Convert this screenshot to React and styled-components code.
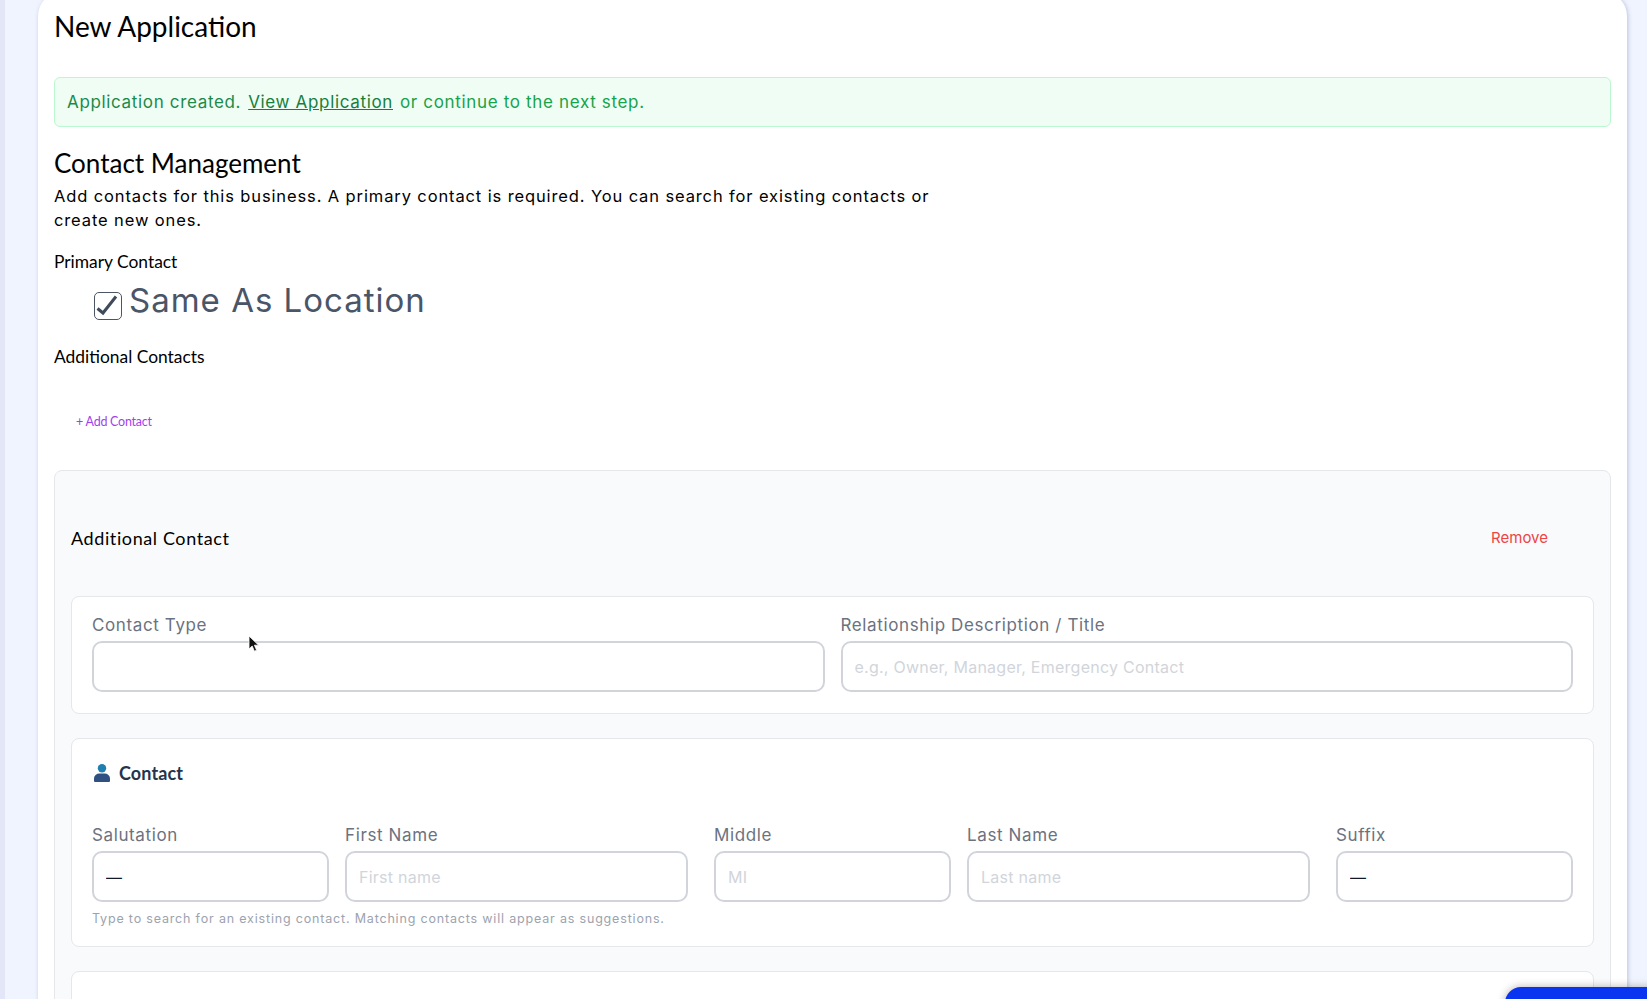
import styled, { createGlobalStyle } from "styled-components";

const GlobalStyle = createGlobalStyle`
  html, body {
    margin: 0;
    height: 100%;
    overflow: hidden;
    background: #f0f4ff;
  }
  body {
    font-family: "Inter", "Liberation Sans", sans-serif;
  }
`;

const headingFont = `"Lato", "Liberation Sans", sans-serif`;

const Page = styled.div`
  display: flex;
  height: 999px;
  overflow: hidden;
  background: #f0f4ff;
`;

const SideStrip = styled.div`
  width: 5px;
  flex-shrink: 0;
  background: #e2e6f6;
`;

const Main = styled.main`
  flex: 1;
  min-width: 0;
  padding: 0 20px 0 33px;
`;

const Card = styled.section`
  box-sizing: border-box;
  margin-top: -8px;
  min-height: 1100px;
  padding: 8px 16px 0;
  background: #fff;
  border-radius: 24px;
  box-shadow: 1px 1px 4px rgba(90, 100, 150, 0.35);
`;

const PageTitle = styled.h1`
  margin: 0;
  height: 77px;
  font-family: ${headingFont};
  font-size: 28px;
  line-height: 52px;
  font-weight: 400;
  color: #000;
`;

const Alert = styled.div`
  box-sizing: border-box;
  height: 50px;
  padding: 0 12px;
  display: flex;
  align-items: center;
  gap: 7px;
  background: #f0fdf4;
  border: 1px solid #bbf7d0;
  border-radius: 6px;
  font-size: 17px;
  letter-spacing: 0.66px;
  color: #16a34a;
`;

const AlertLead = styled.span`
  color: #1a8a4a;
`;

const AlertLink = styled.a`
  color: #15803d;
  text-decoration: underline;
`;

const SectionTitle = styled.h2`
  margin: 20px 0 0;
  font-family: ${headingFont};
  font-size: 26px;
  line-height: 32px;
  font-weight: 400;
  color: #000;
`;

const Intro = styled.p`
  margin: 5px 0 0;
  max-width: 880px;
  font-size: 16.5px;
  line-height: 24px;
  letter-spacing: 0.88px;
  color: #000;
`;

const SubHeading = styled.h3`
  margin: ${(props) => props.$top}px 0 0;
  font-family: ${headingFont};
  font-size: 17.4px;
  line-height: 24px;
  font-weight: 400;
  color: #000;
`;

const CheckRow = styled.label`
  display: flex;
  align-items: center;
  gap: 7px;
  margin: 6px 0 0 40px;
  height: 48px;
`;

const CheckBox = styled.span`
  box-sizing: border-box;
  width: 28px;
  height: 28px;
  margin-top: 3px;
  border: 1px solid #4b5563;
  border-radius: 5px;
  display: flex;
`;

const CheckText = styled.span`
  margin-bottom: 8px;
  font-size: 33px;
  letter-spacing: 1px;
  color: #4a5568;
`;

const AddButton = styled.button`
  display: block;
  margin: 43px 0 0 22px;
  padding: 0;
  border: 0;
  background: none;
  font-family: ${headingFont};
  font-size: 12.5px;
  line-height: 20px;
  letter-spacing: -0.24px;
  color: #a13ff0;
`;

const Panel = styled.div`
  box-sizing: border-box;
  margin-top: 38px;
  padding: 0 16px;
  background: #f9fafb;
  border: 1px solid #e5e7eb;
  border-radius: 8px;
  height: 600px;
`;

const PanelHeader = styled.div`
  display: flex;
  justify-content: space-between;
  align-items: center;
  height: 125px;
  padding: 8px 46px 0 0;
  box-sizing: border-box;
`;

const PanelTitle = styled.h4`
  margin: 0;
  font-family: ${headingFont};
  font-size: 18px;
  font-weight: 400;
  letter-spacing: 0.6px;
  color: #000;
`;

const RemoveButton = styled.button`
  padding: 0;
  border: 0;
  background: none;
  font-family: inherit;
  font-size: 15px;
  color: #ef4444;
`;

const SubCard = styled.div`
  box-sizing: border-box;
  margin-bottom: 24px;
  padding: ${(props) => props.$pad || "17px 20px 20px"};
  height: ${(props) => props.$height}px;
  background: #fff;
  border: 1px solid #e5e7eb;
  border-radius: 8px;
`;

const TwoColumns = styled.div`
  display: grid;
  grid-template-columns: 1fr 1fr;
  gap: 16px;
`;

const NameRow = styled.div`
  display: grid;
  grid-template-columns: 596fr 596fr 237fr;
  gap: 26px;
`;

const NamePair = styled.div`
  display: grid;
  grid-template-columns: 237fr 343fr;
  gap: 16px;
`;

const Field = styled.div`
  display: flex;
  flex-direction: column;
  min-width: 0;
`;

const FieldLabel = styled.label`
  font-size: 17px;
  line-height: 22px;
  letter-spacing: 0.62px;
  color: #6b7280;
  margin-bottom: 5px;
`;

const TextInput = styled.input`
  box-sizing: border-box;
  width: 100%;
  height: 51px;
  padding: 0 12px;
  border: 2px solid #d1d5db;
  border-radius: 10px;
  background: #fff;
  font-family: inherit;
  font-size: 16px;
  letter-spacing: 0.25px;
  color: #111827;
  &::placeholder {
    color: #d1d5db;
    opacity: 1;
  }
`;

const GroupHeading = styled.div`
  display: flex;
  align-items: center;
  gap: 9px;
  height: 68px;
  margin: 0 0 17px 2px;
  font-family: ${headingFont};
  font-size: 18px;
  font-weight: 700;
  letter-spacing: 0.1px;
  color: #24344d;
`;

const Hint = styled.div`
  margin-top: 8px;
  font-size: 12.5px;
  line-height: 18px;
  letter-spacing: 0.82px;
  color: #9ca3af;
`;

const CursorMark = styled.svg`
  position: absolute;
  left: 248px;
  top: 635px;
`;

const HelpTab = styled.div`
  position: fixed;
  right: -60px;
  bottom: -40px;
  width: 202px;
  height: 52px;
  background: #0a35f0;
  border-radius: 16px;
  box-shadow: 0 0 8px rgba(0, 0, 0, 0.3);
`;

const PersonIcon = () => (
  <svg width="16" height="18" viewBox="0 0 16 18">
    <circle cx="8" cy="4.3" r="4.2" fill="#1f7fb0" />
    <path
      d="M0 14.5a5.5 5 0 0 1 5.5-5h5a5.5 5 0 0 1 5.5 5V17a1 1 0 0 1-1 1H1a1 1 0 0 1-1-1z"
      fill="#2f5080"
    />
  </svg>
);

const CheckMark = () => (
  <svg width="26" height="26" viewBox="0 0 26 26">
    <path
      d="M2.5 15.5l5.5 4.5L21 3.5"
      fill="none"
      stroke="#3f4b5b"
      strokeWidth="3"
    />
  </svg>
);

const TextField = ({ label, placeholder, value }) => (
  <Field>
    <FieldLabel>{label}</FieldLabel>
    <TextInput placeholder={placeholder} defaultValue={value} />
  </Field>
);

export default function App() {
  return (
    <Page>
      <GlobalStyle />
      <SideStrip />
      <Main>
        <Card>
          <PageTitle>New Application</PageTitle>
          <Alert>
            <AlertLead>Application created.</AlertLead>
            <AlertLink href="#">View Application</AlertLink> or continue to the next step.
          </Alert>
          <SectionTitle>Contact Management</SectionTitle>
          <Intro>
            Add contacts for this business. A primary contact is required. You can search
            for existing contacts or create new ones.
          </Intro>
          <SubHeading $top={18}>Primary Contact</SubHeading>
          <CheckRow>
            <CheckBox>
              <CheckMark />
            </CheckBox>
            <CheckText>Same As Location</CheckText>
          </CheckRow>
          <SubHeading $top={17}>Additional Contacts</SubHeading>
          <AddButton>+ Add Contact</AddButton>
          <Panel>
            <PanelHeader>
              <PanelTitle>Additional Contact</PanelTitle>
              <RemoveButton>Remove</RemoveButton>
            </PanelHeader>
            <SubCard $height={118}>
              <TwoColumns>
                <TextField label="Contact Type" />
                <TextField
                  label="Relationship Description / Title"
                  placeholder="e.g., Owner, Manager, Emergency Contact"
                />
              </TwoColumns>
            </SubCard>
            <SubCard $height={209} $pad="0 20px">
              <GroupHeading>
                <PersonIcon />
                Contact
              </GroupHeading>
              <NameRow>
                <NamePair>
                  <TextField label="Salutation" value="—" />
                  <TextField label="First Name" placeholder="First name" />
                </NamePair>
                <NamePair>
                  <TextField label="Middle" placeholder="MI" />
                  <TextField label="Last Name" placeholder="Last name" />
                </NamePair>
                <TextField label="Suffix" value="—" />
              </NameRow>
              <Hint>
                Type to search for an existing contact. Matching contacts will appear as
                suggestions.
              </Hint>
            </SubCard>
            <SubCard $height={100} />
          </Panel>
        </Card>
      </Main>
      <CursorMark width="12" height="18" viewBox="0 0 12 18">
        <path
          d="M1 1v13l3.2-3 2.2 5.2 2.2-1-2.2-5h4.2z"
          fill="#111"
          stroke="#fff"
          strokeWidth="0.8"
        />
      </CursorMark>
      <HelpTab />
    </Page>
  );
}
